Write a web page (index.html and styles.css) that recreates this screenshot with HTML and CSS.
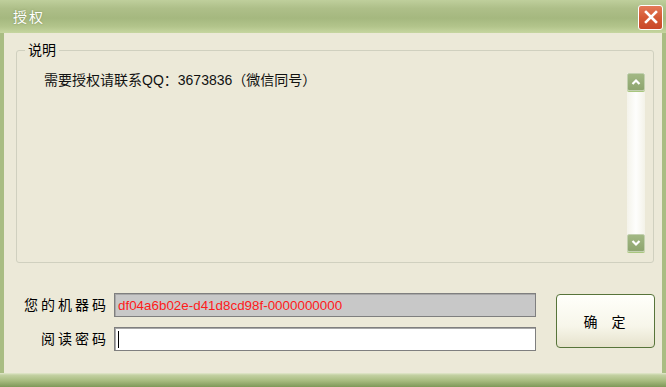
FILE: index.html
```html
<!DOCTYPE html>
<html lang="zh-CN">
<head>
<meta charset="utf-8">
<title>授权</title>
<link rel="stylesheet" href="styles.css">
</head>
<body>
<div class="window">
  <div class="titlebar">
    <span class="title">授权</span>
    <button class="close" aria-label="关闭">
      <svg width="16" height="16" viewBox="0 0 16 16"><path d="M3 3 L13 13 M13 3 L3 13" stroke="#fff" stroke-width="2.6" stroke-linecap="square"/></svg>
    </button>
  </div>
  <div class="client">
    <fieldset class="group">
      <legend>说明</legend>
      <div class="memo-row">
        <div class="memo">需要授权请联系QQ：3673836（微信同号）</div>
        <div class="scrollbar">
          <div class="sb-btn">
            <svg width="10" height="8" viewBox="0 0 10 8"><path d="M1.5 6 L5 2.5 L8.5 6" fill="none" stroke="#fff" stroke-width="2.2"/></svg>
          </div>
          <div class="sb-track"></div>
          <div class="sb-btn">
            <svg width="10" height="8" viewBox="0 0 10 8"><path d="M1.5 2 L5 5.5 L8.5 2" fill="none" stroke="#fff" stroke-width="2.2"/></svg>
          </div>
        </div>
      </div>
    </fieldset>
    <div class="bottom">
      <div class="form">
        <label class="lbl">您的机器码</label>
        <div class="field readonly">df04a6b02e-d41d8cd98f-0000000000</div>
        <label class="lbl">阅读密码</label>
        <div class="field"><span class="caret"></span></div>
      </div>
      <button class="ok">确 定</button>
    </div>
  </div>
  <div class="bottom-frame"></div>
</div>
</body>
</html>
```

FILE: styles.css
```css
html, body {
  margin: 0;
  padding: 0;
  background: #fff;
}
body {
  font-family: "Liberation Sans", "Noto Sans CJK SC", sans-serif;
  font-size: 14px;
  color: #000;
  text-spacing-trim: space-all;
}
.window {
  width: 666px;
  height: 387px;
  display: flex;
  flex-direction: column;
  background: #a9bd83;
  box-sizing: border-box;
}
.titlebar {
  height: 33px;
  flex: none;
  display: flex;
  align-items: center;
  justify-content: space-between;
  padding: 0 3px 0 13px;
  background: linear-gradient(to bottom, #bfcf9c 0%, #aebf89 25%, #a5b87f 55%, #b2c48b 80%, #c6d6a0 100%);
}
.title {
  color: #fff;
  font-size: 14px;
  letter-spacing: 2px;
  line-height: 16px;
  text-shadow: 0 0 2px rgba(90, 110, 60, 0.6);
  margin-top: 1px;
}
.close {
  width: 25px;
  height: 25px;
  margin-top: 1px;
  padding: 0;
  border: 1px solid #fff;
  border-radius: 3px;
  background: linear-gradient(to bottom, #e47a58 0%, #d55a35 50%, #c9482a 100%);
  display: flex;
  align-items: center;
  justify-content: center;
}
.client {
  flex: none;
  height: 340px;
  margin: 0 4px;
  background: #ece9d8;
  padding: 10px 0 0 12px;
  box-sizing: border-box;
}
.group {
  margin: 0;
  width: 638px;
  height: 220px;
  box-sizing: border-box;
  border: 1px solid #d0d0bf;
  border-radius: 3px;
  padding: 0 8px 10px 8px;
}
.group legend {
  padding: 0 3px;
  font-size: 14px;
  line-height: 14px;
}
.memo-row {
  display: flex;
  margin-top: 16px;
  height: 179px;
}
.memo {
  flex: 1;
  padding-left: 19px;
  line-height: 14px;
  font-size: 14px;
  color: #111;
}
.scrollbar {
  width: 18px;
  display: flex;
  flex-direction: column;
  background: linear-gradient(to right, #f4f3ea 0%, #fefefd 50%, #f3f2e8 100%);
}
.sb-btn {
  height: 18px;
  flex: none;
  box-sizing: border-box;
  border: 1px solid #c3d0b0;
  border-radius: 2px;
  background: linear-gradient(to bottom, #a2b884 0%, #8ea56f 100%);
  display: flex;
  align-items: center;
  justify-content: center;
  box-shadow: 0 1px 0 #a8c67e;
}
.sb-track {
  flex: 1;
}
.bottom {
  display: flex;
  align-items: flex-start;
  margin-top: 30px;
}
.form {
  display: grid;
  grid-template-columns: 93px 422px;
  column-gap: 5px;
  row-gap: 10px;
  align-items: center;
}
.lbl {
  text-align: right;
  font-size: 14px;
  letter-spacing: 3px;
  line-height: 16px;
}
.field {
  height: 24px;
  box-sizing: border-box;
  border: 1px solid #7f7f7f;
  box-shadow: inset 1px 1px 0 #a8a8a8;
  background: #fff;
  padding: 0 3px;
  display: flex;
  align-items: center;
}
.field.readonly {
  background: #c8c8c8;
  color: #ff1a1a;
  font-size: 13.4px;
}
.caret {
  width: 1px;
  height: 17px;
  background: #000;
}
.ok {
  margin: 1px 0 0 20px;
  width: 99px;
  height: 54px;
  box-sizing: border-box;
  border: 1px solid #57743a;
  border-radius: 4px;
  background: linear-gradient(to bottom, #fffffa 0%, #f7f6ea 60%, #e6e2cc 100%);
  font-family: "Liberation Sans", "Noto Sans CJK SC", sans-serif;
  font-size: 14px;
  letter-spacing: 4px;
  color: #000;
  padding: 0 0 0 2px;
  word-spacing: 2px;
}
.bottom-frame {
  flex: 1;
  background: linear-gradient(to bottom, #e3e8cd 0%, #c3d1a2 15%, #a8bc80 55%, #7f9859 100%);
}
```
